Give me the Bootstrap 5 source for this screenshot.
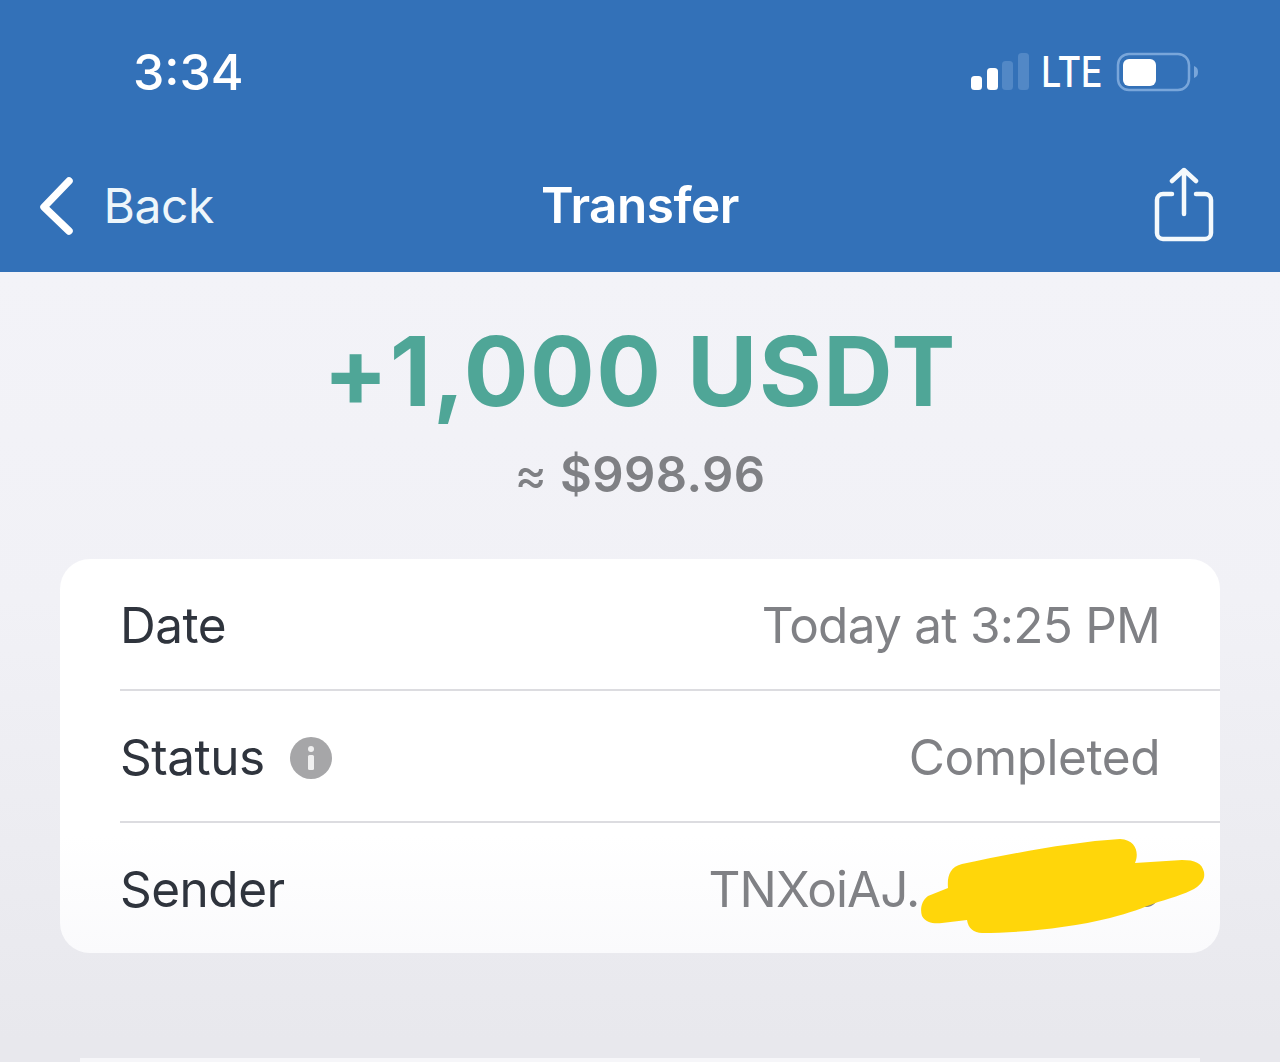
<!DOCTYPE html>
<html lang="en">
<head>
  <meta charset="UTF-8">
  <meta name="viewport" content="width=device-width, initial-scale=1.0">
  <link href="https://cdn.jsdelivr.net/npm/bootstrap@5.3.0/dist/css/bootstrap.min.css" rel="stylesheet">
  <title>Transfer</title>
  <style>
    html, body { height: 1062px; overflow: hidden; }
    body { font-family: Inter, "Liberation Sans", sans-serif; background: linear-gradient(#f3f3f8 272px, #f1f1f6 600px, #e8e8ed 1040px); }
    .top-blue { background: #3371b8; height: 272px; color: #fff; }
    .status-row { height: 144px; padding: 0 80px 0 133px; }
    .clock { font-size: 50px; font-weight: 500; line-height: 1; }
    .net-label { font-size: 42px; font-weight: 500; line-height: 1; letter-spacing: -.5px; transform: scaleX(.86); margin: 0 1px 0 -2px; }
    .nav-row { height: 128px; padding: 0 38px 4px; }
    .back-label { font-size: 48px; line-height: 1; color: #eef6fb; letter-spacing: -.4px; margin-left: 29.5px; }
    .nav-title { font-size: 49.5px; font-weight: 600; line-height: 1; letter-spacing: -.5px; }
    .nav-side { width: 240px; }
    .share-icon { margin: 0 28px 2px 0; }
    .amount { font-size: 96px; font-weight: 700; line-height: 1; color: #4fa697; letter-spacing: 1.6px; margin-top: 51px; }
    .amount-usd { font-size: 49px; font-weight: 600; line-height: 1; color: #7f8084; margin-top: 31px; letter-spacing: .4px; }
    .approx { font-weight: 400; }
    .detail-box { margin: 60px 60px 0; height: 394px; border-radius: 30px; background: linear-gradient(#fff 70%, #fafafc); overflow: hidden; }
    .detail-row { height: 132px; margin-left: 60px; padding: 4px 60px 0 0; border-bottom: 2px solid #dcdce0; }
    .detail-row:last-child { border-bottom: 0; padding-top: 2px; }
    .detail-key { font-size: 49.5px; line-height: 1; color: #2f343d; letter-spacing: -.5px; }
    .detail-val { font-size: 49.5px; line-height: 1; color: #808185; letter-spacing: -.45px; }
    .val-date { letter-spacing: -.75px; }
    .val-addr { letter-spacing: -.95px; }
    .info-dot { width: 42px; height: 42px; margin-left: 25px; }
    .addr-hidden { display: inline-block; width: 212px; }
    .scribble { position: absolute; left: 920px; top: 836px; }
    .foot-line { position: absolute; left: 80px; right: 80px; bottom: 0; height: 4px; background: #f6f6f9; }
  </style>
</head>
<body class="position-relative">
  <header class="top-blue">
    <div class="status-row d-flex align-items-center justify-content-between">
      <span class="clock">3:34</span>
      <div class="d-flex align-items-center gap-2">
        <svg width="60" height="40" viewBox="0 0 60 40">
          <rect x="1" y="24" width="11" height="14" rx="3.5" fill="#fff"/>
          <rect x="17" y="16" width="11" height="22" rx="3.5" fill="#fff"/>
          <rect x="32" y="9" width="11" height="29" rx="3.5" fill="#5288c6"/>
          <rect x="48" y="1" width="11" height="37" rx="3.5" fill="#5288c6"/>
        </svg>
        <span class="net-label">LTE</span>
        <svg width="84" height="42" viewBox="0 0 84 42">
          <rect x="2" y="3" width="71" height="36" rx="11" fill="none" stroke="#79a6da" stroke-width="2.5"/>
          <rect x="7" y="8" width="33" height="27" rx="6" fill="#fff"/>
          <path d="M78 15c3 1 4 3 4 6s-1 5-4 6z" fill="#79a6da"/>
        </svg>
      </div>
    </div>
    <div class="nav-row d-flex align-items-center justify-content-between">
      <div class="nav-side d-flex align-items-center">
        <svg width="36" height="60" viewBox="0 0 36 60" fill="none" stroke="#fff" stroke-width="7.5" stroke-linecap="round" stroke-linejoin="round">
          <path d="M31 5 6 31l25 24"/>
        </svg>
        <span class="back-label">Back</span>
      </div>
      <div class="nav-title">Transfer</div>
      <div class="nav-side d-flex justify-content-end">
        <svg class="share-icon" width="60" height="76" viewBox="0 0 60 76" fill="none" stroke="#f4f9fc" stroke-width="4.5" stroke-linecap="round" stroke-linejoin="round">
          <path d="M18 27H9a6 6 0 0 0-6 6v33a6 6 0 0 0 6 6h42a6 6 0 0 0 6-6V33a6 6 0 0 0-6-6h-9"/>
          <path d="M30 47V3M18 14 30 3l12 11"/>
        </svg>
      </div>
    </div>
  </header>

  <main>
    <div class="amount text-center">+1,000 USDT</div>
    <div class="amount-usd text-center"><span class="approx">≈</span> $998.96</div>

    <div class="detail-box">
      <div class="detail-row d-flex align-items-center justify-content-between">
        <span class="detail-key">Date</span>
        <span class="detail-val val-date">Today at 3:25 PM</span>
      </div>
      <div class="detail-row d-flex align-items-center justify-content-between">
        <div class="d-flex align-items-center">
          <span class="detail-key">Status</span>
          <svg class="info-dot" viewBox="0 0 42 42">
            <circle cx="21" cy="21" r="21" fill="#a6a6a8"/>
            <circle cx="21" cy="12" r="3" fill="#f0f0f0"/>
            <rect x="18" y="18" width="6" height="15" rx="1.5" fill="#f0f0f0"/>
          </svg>
        </div>
        <span class="detail-val">Completed</span>
      </div>
      <div class="detail-row d-flex align-items-center justify-content-between">
        <span class="detail-key">Sender</span>
        <span class="detail-val val-addr">TNXoiAJ.<span class="addr-hidden"></span>o</span>
      </div>
    </div>
  </main>

  <svg class="scribble" width="290" height="100" viewBox="0 0 290 100">
    <path d="M28 52 8 60C1 65 0 74 2 80 6 87 14 88 22 87L47 84C48 92 54 97 62 97 100 97 150 92 190 82 210 77 222 72 238 66 255 61 270 56 277 51 283 46 285 42 284 36 282 27 275 24 262 24L215 27C219 18 217 4 200 3 150 6 90 18 42 28 30 31 27 40 28 52Z" fill="#ffd60a"/>
  </svg>
  <div class="foot-line"></div>
</body>
</html>
